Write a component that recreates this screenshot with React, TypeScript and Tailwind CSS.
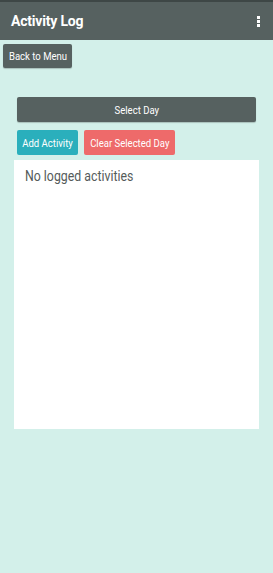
function Label({ children }: { children: string }) {
  return (
    <span className="inline-block whitespace-nowrap text-[11.5px] leading-none scale-x-[0.83] translate-y-[1px]">{children}</span>
  );
}

export default function App() {
  return (
    <div className="w-[273px] h-[573px] bg-[#d3f0ea] flex flex-col" style={{ fontFamily: 'Roboto, "Noto Sans", sans-serif' }}>
      <div className="h-[40px] bg-[#566160] border-t-2 border-[#3e4746] flex items-center justify-between pl-[11px] pr-[13px] shrink-0">
        <span className="text-white font-bold text-[14px] tracking-[-0.2px] leading-none">Activity Log</span>
        <div className="flex flex-col gap-[1px]">
          <div className="w-[3px] h-[3px] bg-white" />
          <div className="w-[3px] h-[3px] bg-white" />
          <div className="w-[3px] h-[3px] bg-white" />
        </div>
      </div>
      <div className="pl-[3px] pt-[4px]">
        <button className="h-[24px] w-[69px] bg-[#566160] text-white rounded-[2px] flex items-center justify-center shadow-[0_1px_1px_rgba(0,0,0,0.2)]">
          <Label>Back to Menu</Label>
        </button>
      </div>
      <div className="px-[17px] pt-[29px]">
        <button className="h-[25px] w-full bg-[#566160] text-white rounded-[2px] flex items-center justify-center shadow-[0_1px_1px_rgba(0,0,0,0.2)]">
          <Label>Select Day</Label>
        </button>
      </div>
      <div className="flex gap-[6px] pl-[17px] pt-[8px]">
        <button className="h-[25px] w-[61px] bg-[#2aafbc] text-white rounded-[2px] flex items-center justify-center">
          <Label>Add Activity</Label>
        </button>
        <button className="h-[25px] w-[91px] bg-[#ee6a6a] text-white rounded-[2px] flex items-center justify-center">
          <Label>Clear Selected Day</Label>
        </button>
      </div>
      <div className="mx-[14px] w-[245px] mt-[5px] h-[269px] bg-white pl-[11px] pt-[4px]">
        <span className="inline-block origin-left scale-x-[0.88] whitespace-nowrap text-[#555b5a] text-[14px]">No logged activities</span>
      </div>
    </div>
  );
}
